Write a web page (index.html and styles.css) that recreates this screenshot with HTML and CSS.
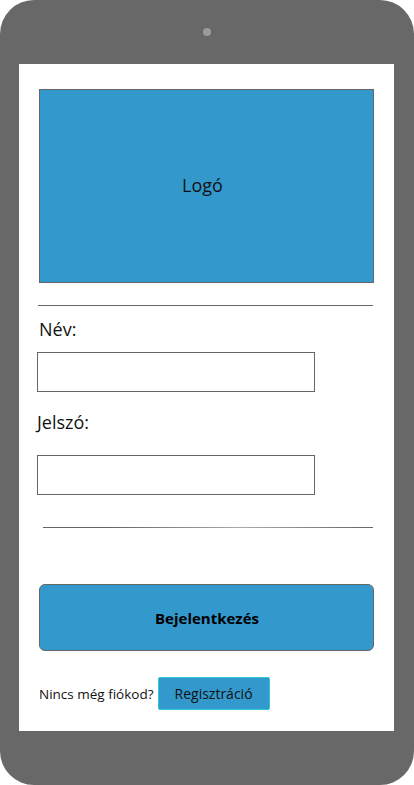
FILE: index.html
```html
<!DOCTYPE html>
<html lang="hu">
<head>
<meta charset="utf-8">
<title>Bejelentkezés</title>
<link rel="stylesheet" href="styles.css">
</head>
<body>
<div class="device">
  <div class="bezel-top"><span class="camera"></span></div>
  <main class="screen">
    <div class="logo">Logó</div>
    <hr class="rule rule-top">
    <label class="label label-name" for="nev">Név:</label>
    <input class="field field-name" id="nev" type="text">
    <label class="label label-pass" for="jelszo">Jelszó:</label>
    <input class="field field-pass" id="jelszo" type="password">
    <hr class="rule rule-bottom">
    <button class="login" type="button">Bejelentkezés</button>
    <div class="signup">
      <span class="signup-text">Nincs még fiókod?</span>
      <button class="register" type="button">Regisztráció</button>
    </div>
  </main>
</div>
</body>
</html>
```

FILE: styles.css
```css
* { box-sizing: border-box; }
html, body { margin: 0; padding: 0; background: #ffffff; }
body { font-family: "Open Sans", "Noto Sans", sans-serif; color: #111; }

.device {
  width: 414px;
  height: 785px;
  background: #686868;
  border-radius: 34px;
  padding: 0 20px 0 19px;
  display: flex;
  flex-direction: column;
}
.bezel-top {
  height: 64px;
  display: flex;
  justify-content: center;
  padding-top: 28px;
}
.camera {
  width: 8px;
  height: 8px;
  border-radius: 50%;
  background: #9a9a9a;
}
.screen {
  width: 375px;
  height: 667px;
  background: #ffffff;
  display: flex;
  flex-direction: column;
  align-items: flex-start;
  padding-top: 25px;
}
.logo {
  margin-left: 20px;
  width: 335px;
  height: 194px;
  background: #3398cc;
  border: 1px solid #666;
  display: flex;
  align-items: center;
  justify-content: center;
  font-size: 18px;
  color: #111;
  padding-right: 8px;
  padding-bottom: 2px;
}
.rule {
  border: 0;
  height: 1px;
  margin: 0;
  background: #666;
}
.rule-top {
  margin-top: 22px;
  margin-left: 19px;
  width: 335px;
}
.label {
  font-size: 18px;
  line-height: 24px;
  color: #111;
}
.label-name { margin-top: 11px; margin-left: 20px; }
.label-pass { margin-top: 18px; margin-left: 18px; }
.field {
  width: 278px;
  height: 40px;
  border: 1px solid #666;
  background: #fff;
  margin: 0 0 0 18px;
  padding: 0;
}
.field-name { margin-top: 11px; }
.field-pass { margin-top: 21px; }
.rule-bottom {
  margin-top: 32px;
  margin-left: 24px;
  width: 330px;
  background: linear-gradient(to right, #666 20%, #aaa 60%, #666 100%);
}
.login {
  margin-top: 56px;
  margin-left: 20px;
  width: 335px;
  height: 67px;
  background: #3398cc;
  border: 1px solid #666;
  border-radius: 6px;
  font-family: "Open Sans", "Noto Sans", sans-serif;
  font-weight: 700;
  font-size: 15px;
  color: #000;
  padding: 0 0 0 1px;
}
.signup {
  margin-top: 26px;
  margin-left: 20px;
  display: flex;
  align-items: center;
  gap: 4px;
}
.signup-text {
  font-size: 13.5px;
  color: #111;
}
.register {
  width: 112px;
  height: 33px;
  background: #3398cc;
  border: 1px solid #2fc8d6;
  border-radius: 2px;
  font-family: "Open Sans", "Noto Sans", sans-serif;
  font-size: 14px;
  color: #111;
  padding: 0;
}
```
